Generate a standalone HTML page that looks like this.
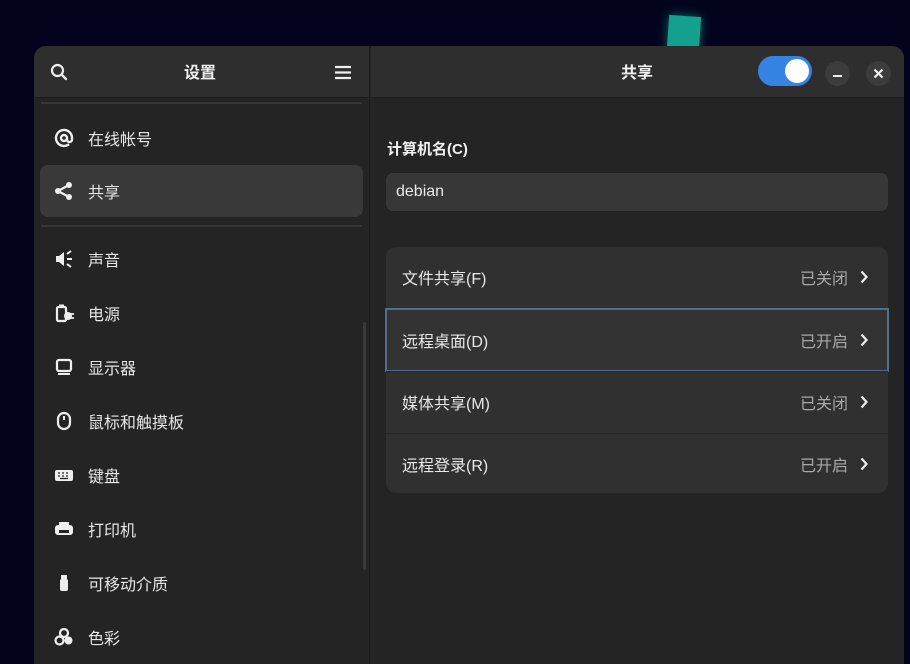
<!DOCTYPE html>
<html><head><meta charset="utf-8"><style>
*{margin:0;padding:0;box-sizing:border-box}
html{width:910px;height:664px;overflow:hidden}
body{width:910px;height:664px;background:#03031e;overflow:hidden;position:relative;font-family:"Liberation Sans","Noto Sans CJK SC",sans-serif;color:#e8e8e8}
.teal{position:absolute;left:668px;top:16px;width:32px;height:34px;background:#14a08f;transform:rotate(4deg);box-shadow:0 0 10px #0a6a60}
.win{position:absolute;left:34px;top:46px;width:870px;height:618px;background:#242424;border-radius:12px 12px 0 0;overflow:hidden}
.side{position:absolute;left:0;top:0;width:336px;height:100%;background:#242424;border-right:1px solid #1b1b1b}
.shead{height:52px;background:#2e2e2e;position:relative;border-bottom:1px solid #1c1c1c}
.mhead{position:absolute;left:337px;top:0;right:0;height:52px;background:#2e2e2e;border-bottom:1px solid #1c1c1c}
.title{position:absolute;top:13px;font-size:16px;font-weight:bold;color:#f0f0f0}
.sep{position:absolute;left:7px;right:7px;height:2px;background:#363636}
.item{position:absolute;left:6px;width:323px;height:52px;border-radius:8px;display:flex;align-items:center;font-size:16px;color:#e6e6e6}
.item svg{position:absolute;left:14px}
.item span{position:absolute;left:48px}
.sel{background:#393939}
.lbl{position:absolute;left:353px;top:92px;font-size:15px;font-weight:bold;color:#f2f2f2}
.entry{position:absolute;left:352px;top:127px;width:502px;height:38px;background:#373737;border-radius:7px;font-size:16px;padding:10px 0 0 10px;color:#e8e8e8}
.list{position:absolute;left:352px;top:201px;width:502px;height:246px;background:#303030;border-radius:10px;overflow:visible}
.row{position:absolute;left:0;width:502px;height:62px;font-size:16px;color:#e8e8e8}
.row .t{position:absolute;left:16px;top:18px}
.row .s{position:absolute;right:40px;top:18px;color:#a9a9a9}
.row svg{position:absolute;right:20px;top:23px}
.row+.row{border-top:1px solid #262626}
.foc{outline:2px solid #4f6f8f;outline-offset:-1px;background:#333}
.sb{position:absolute;left:329px;top:276px;width:3px;height:248px;background:#3a3a3a;border-radius:2px}
.cbtn{position:absolute;top:15px;width:25px;height:25px;border-radius:50%;background:#3c3c3c}
</style></head><body>
<div class="teal"></div>
<div class="win">
 <div class="side">
  <div class="shead">
   <svg style="position:absolute;left:16px;top:17px" width="18" height="18" viewBox="0 0 18 18"><circle cx="7.5" cy="7.5" r="5.5" fill="none" stroke="#eee" stroke-width="2.2"/><path d="M11.5 11.5L16 16" stroke="#eee" stroke-width="2.4" stroke-linecap="round"/></svg>
   <div class="title" style="left:150px">设置</div>
   <svg style="position:absolute;left:300px;top:19px" width="18" height="15"><path d="M1 2h16M1 7.5h16M1 13h16" stroke="#eee" stroke-width="2.2"/></svg>
  </div>
  <div class="sep" style="top:56px"></div>
  <div class="item" style="top:66px"><svg width="20" height="20" viewBox="0 0 20 20"><circle cx="10" cy="10" r="3" fill="none" stroke="#eee" stroke-width="2.4"/><path d="M13 10v1.5a2.5 2.5 0 0 0 5 0V10a8 8 0 1 0-3 6.2" fill="none" stroke="#eee" stroke-width="2.4"/></svg><span>在线帐号</span></div>
  <div class="item sel" style="top:119px"><svg width="20" height="20" viewBox="0 0 20 20"><circle cx="4" cy="10" r="3" fill="#eee"/><circle cx="15" cy="4" r="3" fill="#eee"/><circle cx="15" cy="16" r="3" fill="#eee"/><path d="M4 10L15 4M4 10L15 16" stroke="#eee" stroke-width="2.2"/></svg><span>共享</span></div>
  <div class="sep" style="top:179px"></div>
  <div class="item" style="top:187px"><svg width="20" height="20" viewBox="0 0 20 20"><path d="M2 7h3l5-4v14l-5-4H2z" fill="#eee"/><path d="M13 10h5M13 5l4-3M13 15l4 3" stroke="#eee" stroke-width="2"/></svg><span>声音</span></div>
  <div class="item" style="top:241px"><svg width="20" height="20" viewBox="0 0 20 20"><rect x="3" y="4" width="9" height="14" rx="1.5" fill="none" stroke="#eee" stroke-width="2.2"/><rect x="5" y="1.5" width="5" height="3" fill="#eee"/><circle cx="14" cy="13" r="4" fill="#eee"/><path d="M17 11h3M17 15h3" stroke="#eee" stroke-width="1.8"/></svg><span>电源</span></div>
  <div class="item" style="top:295px"><svg width="20" height="20" viewBox="0 0 20 20"><rect x="3" y="3" width="14" height="11" rx="2" fill="none" stroke="#eee" stroke-width="2.2"/><rect x="4" y="16" width="12" height="2" fill="#eee"/></svg><span>显示器</span></div>
  <div class="item" style="top:349px"><svg width="20" height="20" viewBox="0 0 20 20"><rect x="4" y="2" width="12" height="16" rx="6" fill="none" stroke="#eee" stroke-width="2.2"/><path d="M10 5v4" stroke="#eee" stroke-width="2"/></svg><span>鼠标和触摸板</span></div>
  <div class="item" style="top:403px"><svg width="20" height="20" viewBox="0 0 20 20"><rect x="1" y="5" width="18" height="11" rx="2" fill="#eee"/><path d="M4 8h2M8 8h2M12 8h2M4 11h2M8 11h2M12 11h2M6 13.5h8" stroke="#242424" stroke-width="1.3"/></svg><span>键盘</span></div>
  <div class="item" style="top:457px"><svg width="20" height="20" viewBox="0 0 20 20"><rect x="5" y="3" width="10" height="3" fill="#eee"/><rect x="1" y="6" width="18" height="10" rx="3" fill="#eee"/><rect x="5" y="11" width="10" height="3" fill="#242424"/></svg><span>打印机</span></div>
  <div class="item" style="top:511px"><svg width="20" height="20" viewBox="0 0 20 20"><rect x="7" y="2" width="6" height="4" fill="#eee"/><rect x="6" y="6" width="8" height="12" rx="2" fill="#eee"/></svg><span>可移动介质</span></div>
  <div class="item" style="top:565px"><svg width="20" height="20" viewBox="0 0 20 20"><circle cx="10" cy="6" r="4" fill="none" stroke="#eee" stroke-width="2.2"/><circle cx="5.5" cy="13.5" r="4" fill="none" stroke="#eee" stroke-width="2.2"/><circle cx="14.5" cy="13.5" r="4" fill="#eee"/></svg><span>色彩</span></div>
  <div class="sb"></div>
 </div>
 <div class="mhead">
  <div class="title" style="left:250px">共享</div>
  <div style="position:absolute;left:387px;top:10px;width:54px;height:30px;border-radius:15px;background:#3584e4"><div style="position:absolute;right:3px;top:3px;width:24px;height:24px;border-radius:50%;background:#fff"></div></div>
  <div class="cbtn" style="left:454px"><div style="position:absolute;left:8px;top:14px;width:9px;height:2px;background:#eee"></div></div>
  <div class="cbtn" style="left:495px"><svg style="position:absolute;left:7px;top:7px" width="11" height="11"><path d="M1.5 1.5l8 8M9.5 1.5l-8 8" stroke="#eee" stroke-width="2.2"/></svg></div>
 </div>
 <div class="lbl">计算机名(C)</div>
 <div class="entry">debian</div>
 <div class="list">
  <div class="row" style="top:0"><span class="t">文件共享(F)</span><span class="s">已关闭</span><svg width="8" height="14"><path d="M1.5 1.5l5 5.5-5 5.5" fill="none" stroke="#eee" stroke-width="2.2"/></svg></div>
  <div class="row foc" style="top:62px"><span class="t">远程桌面(D)</span><span class="s">已开启</span><svg width="8" height="14"><path d="M1.5 1.5l5 5.5-5 5.5" fill="none" stroke="#eee" stroke-width="2.2"/></svg></div>
  <div class="row" style="top:124px"><span class="t">媒体共享(M)</span><span class="s">已关闭</span><svg width="8" height="14"><path d="M1.5 1.5l5 5.5-5 5.5" fill="none" stroke="#eee" stroke-width="2.2"/></svg></div>
  <div class="row" style="top:186px;height:60px"><span class="t">远程登录(R)</span><span class="s">已开启</span><svg width="8" height="14"><path d="M1.5 1.5l5 5.5-5 5.5" fill="none" stroke="#eee" stroke-width="2.2"/></svg></div>
 </div>
</div>
</body></html>
